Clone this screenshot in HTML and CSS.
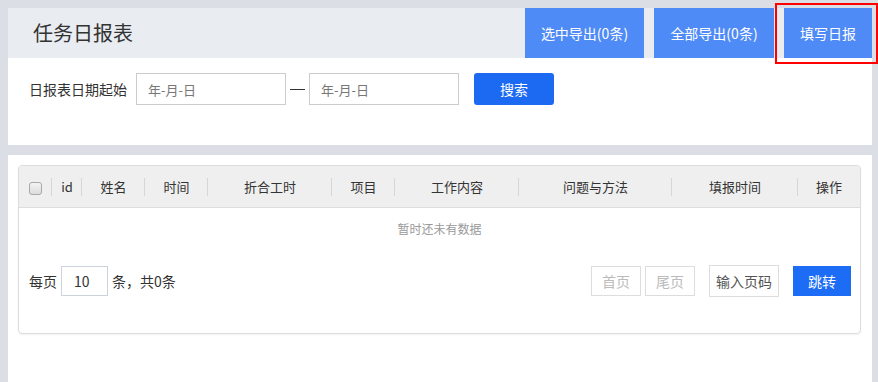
FILE: index.html
```html
<!DOCTYPE html>
<html lang="zh-CN">
<head>
    <meta charset="UTF-8">
    <title>任务日报表</title>
    <link rel="stylesheet" href="styles.css">
</head>
<body>
    <div class="page">
        <div class="panel">
            <div class="panel-head">
                <h1 class="title">任务日报表</h1>
                <div class="head-actions">
                    <button class="head-btn w-sel">选中导出(0条)</button>
                    <button class="head-btn w-all">全部导出(0条)</button>
                    <button class="head-btn w-fill">填写日报</button>
                </div>
            </div>
            <div class="search-row">
                <label class="search-label">日报表日期起始</label>
                <input class="date-input" type="text" placeholder="年-月-日">
                <span class="dash"><i></i></span>
                <input class="date-input" type="text" placeholder="年-月-日">
                <button class="search-btn">搜索</button>
            </div>
        </div>

        <div class="panel panel-list">
            <div class="table-box">
                <table class="grid">
                    <colgroup>
                        <col style="width:33px"><col style="width:30px"><col style="width:63px"><col style="width:63px">
                        <col style="width:124px"><col style="width:63px"><col style="width:124px"><col style="width:153px">
                        <col style="width:126px"><col>
                    </colgroup>
                    <thead>
                        <tr>
                            <th class="first"><span class="check"></span></th>
                            <th>id</th>
                            <th>姓名</th>
                            <th>时间</th>
                            <th>折合工时</th>
                            <th>项目</th>
                            <th>工作内容</th>
                            <th>问题与方法</th>
                            <th>填报时间</th>
                            <th>操作</th>
                        </tr>
                    </thead>
                    <tbody>
                        <tr><td colspan="10" class="empty">暂时还未有数据</td></tr>
                    </tbody>
                </table>
                <div class="pager">
                    <div class="pager-left">
                        <span>每页</span>
                        <input class="size-input" type="text" value="10">
                        <span>条，共0条</span>
                    </div>
                    <div class="pager-right">
                        <button class="page-btn">首页</button>
                        <button class="page-btn">尾页</button>
                        <input class="page-input" type="text" placeholder="输入页码">
                        <button class="jump-btn">跳转</button>
                    </div>
                </div>
            </div>
        </div>
    </div>
    <div class="mark"></div>
</body>
</html>
```

FILE: styles.css
```css
body {
    margin: 0;
    background-color: #dcdee5;
    font-family: "Noto Sans CJK SC", "Liberation Sans", sans-serif;
    font-size: 14px;
    color: #333;
    height: 382px;
    overflow: hidden;
}
.page {
    padding: 8px 6px 0 8px;
}
.panel {
    background-color: white;
}
.panel-head {
    display: flex;
    justify-content: space-between;
    height: 50px;
    background-color: #e9ecf0;
}
.title {
    margin: 0;
    padding-left: 25px;
    font-size: 20px;
    font-weight: 400;
    line-height: 50px;
    color: #333;
}
.head-actions {
    display: flex;
    gap: 10px;
}
.head-btn {
    height: 50px;
    border: none;
    background-color: #4f8bf6;
    color: white;
    font-family: inherit;
    font-size: 14px;
    padding: 0;
}
.w-sel { width: 119px; }
.w-all { width: 120px; }
.w-fill { width: 88px; }
.search-row {
    display: flex;
    align-items: center;
    padding: 15px 0 40px 21px;
}
.search-label {
    margin-right: 9px;
}
.date-input {
    box-sizing: border-box;
    width: 150px;
    height: 32px;
    border: 1px solid #ccc;
    padding: 0 11px;
    font-family: inherit;
    font-size: 13px;
    outline: none;
}
.date-input::placeholder {
    color: #777;
}
.dash {
    display: flex;
    justify-content: center;
    width: 23px;
}
.dash i {
    display: block;
    width: 15px;
    border-top: 1px solid #333;
}
.search-btn {
    width: 80px;
    height: 32px;
    margin-left: 15px;
    border: none;
    border-radius: 3px;
    background-color: #1d6af2;
    color: white;
    font-family: inherit;
    font-size: 14px;
}
.panel-list {
    margin-top: 10px;
    height: 217px;
    padding: 10px 11px 0 10px;
}
.table-box {
    border: 1px solid #ddd;
    border-radius: 4px;
    box-shadow: 0 1px 2px rgba(0, 0, 0, 0.06);
    overflow: hidden;
}
.grid {
    width: 100%;
    border-collapse: collapse;
    table-layout: fixed;
}
.grid th {
    height: 41px;
    background-color: #efefef;
    border-bottom: 1px solid #ddd;
    font-weight: 400;
    font-size: 13px;
    text-align: center;
    position: relative;
    padding: 0;
}
.grid th + th::before {
    content: "";
    position: absolute;
    left: -1px;
    top: 12px;
    height: 18px;
    border-left: 1px solid #d6d6d6;
}
.check {
    display: inline-block;
    width: 11px;
    height: 11px;
    border: 1px solid #a9a9a9;
    border-radius: 3px;
    background: linear-gradient(#f4f4f4, #dcdcdc);
    vertical-align: middle;
}
.empty {
    height: 40px;
    text-align: center;
    font-size: 12px;
    color: #999;
    padding: 0 0 4px;
}
.pager {
    display: flex;
    justify-content: space-between;
    align-items: center;
    padding: 13px 9px 36px 10px;
}
.pager-left {
    display: flex;
    align-items: center;
}
.size-input {
    box-sizing: border-box;
    width: 47px;
    height: 30px;
    margin: 0 4px;
    border: 1px solid #ccd3dc;
    padding: 0 0 0 12px;
    font-family: inherit;
    font-size: 14px;
    color: #333;
    outline: none;
}
.pager-right {
    display: flex;
    align-items: center;
}
.page-btn {
    width: 50px;
    height: 30px;
    margin-left: 4px;
    border: 1px solid #ddd;
    background-color: white;
    color: #bbb;
    font-family: inherit;
    font-size: 14px;
    padding: 0;
}
.page-input {
    box-sizing: border-box;
    width: 70px;
    height: 32px;
    margin-left: 14px;
    border: 1px solid #ddd;
    padding: 0 6px;
    font-family: inherit;
    font-size: 14px;
    outline: none;
}
.page-input::placeholder {
    color: #555;
}
.jump-btn {
    width: 58px;
    height: 30px;
    margin-left: 14px;
    border: none;
    background-color: #1d6cf5;
    color: white;
    font-family: inherit;
    font-size: 14px;
    padding: 0;
}
.mark {
    position: absolute;
    left: 775px;
    top: 3px;
    width: 99px;
    height: 57px;
    border: 2px solid #ff0000;
}
```
